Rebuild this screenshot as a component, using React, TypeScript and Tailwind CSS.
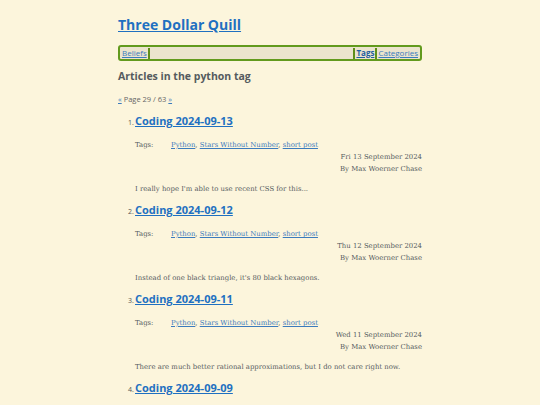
const posts = [
  {
    n: 1,
    title: "Coding 2024-09-13",
    date: "Fri 13 September 2024",
    summary: "I really hope I'm able to use recent CSS for this...",
  },
  {
    n: 2,
    title: "Coding 2024-09-12",
    date: "Thu 12 September 2024",
    summary: "Instead of one black triangle, it's 80 black hexagons.",
  },
  {
    n: 3,
    title: "Coding 2024-09-11",
    date: "Wed 11 September 2024",
    summary: "There are much better rational approximations, but I do not care right now.",
  },
  {
    n: 4,
    title: "Coding 2024-09-09",
    date: "Mon 9 September 2024",
    summary: "",
  },
];

const head = { fontFamily: '"Open Sans", "Noto Sans", sans-serif' };
const body = { fontFamily: '"DejaVu Serif", "Liberation Serif", serif' };

function Sep() {
  return <span className="inline-block w-[2px] h-[11px] bg-[#5f8f1a] mx-[1px]" />;
}

export default function App() {
  return (
    <main className="min-h-screen bg-[#fcf5dc] text-[#555b5e] overflow-hidden h-[405px]">
      <div className="w-[304px] mx-auto pt-[14px]">
        <h1 style={head} className="text-[14px] leading-[22px] font-bold">
          <a href="#" className="text-[#1f70c1] underline">
            Three Dollar Quill
          </a>
        </h1>

        <nav
          style={head}
          className="mt-[9px] h-[16px] border-2 border-[#629a1d] rounded-[3px] bg-[#ebe4cd] flex items-center px-[2px] text-[8px]"
        >
          <a href="#" className="text-[#3b7bbd] underline">
            Beliefs
          </a>
          <Sep />
          <div className="flex-1" />
          <Sep />
          <a href="#" className="text-[#1f5f9f] font-bold underline">
            Tags
          </a>
          <Sep />
          <a href="#" className="text-[#3b7bbd] underline">
            Categories
          </a>
        </nav>

        <h2 style={head} className="mt-[7px] text-[10.5px] leading-[16px] font-bold text-[#555b5e]">
          Articles in the python tag
        </h2>

        <p style={head} className="mt-[10px] text-[7.5px] leading-[10px] text-[#666]">
          <a href="#" className="text-[#3b7bbd] underline">«</a> Page 29 / 63{" "}
          <a href="#" className="text-[#3b7bbd] underline">»</a>
        </p>

        <ol className="mt-[8px]">
          {posts.map((p) => (
            <li key={p.n} className="pl-[17px] h-[89px]">
              <div className="flex items-baseline" style={head}>
                <span className="text-[7px] w-[7px] -ml-[7px] text-[#555]">{p.n}.</span>
                <a href="#" className="text-[11px] leading-[18px] font-bold text-[#1f70c1] underline">
                  {p.title}
                </a>
              </div>

              <div style={body} className="text-[6.9px] leading-[12px] mt-[9px]">
                <div className="flex">
                  <span className="w-[36px]">Tags:</span>
                  <span>
                    <a href="#" className="text-[#3b7bbd] underline">Python</a>,{" "}
                    <a href="#" className="text-[#3b7bbd] underline">Stars Without Number</a>,{" "}
                    <a href="#" className="text-[#3b7bbd] underline">short post</a>
                  </span>
                </div>
                <div className="text-right">{p.date}</div>
                <div className="text-right">By Max Woerner Chase</div>
                <p className="mt-[8px]">{p.summary}</p>
              </div>
            </li>
          ))}
        </ol>
      </div>
    </main>
  );
}
